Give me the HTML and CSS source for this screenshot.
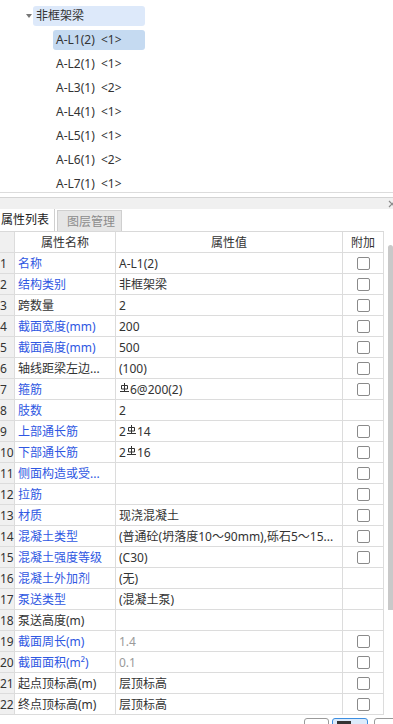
FILE: index.html
```html
<!DOCTYPE html>
<html lang="zh-CN">
<head>
  <meta charset="UTF-8">
  <title>属性列表</title>
  <link rel="stylesheet" href="styles.css">
</head>
<body>
  <!-- 构件树 -->
  <div class="tree">
    <div class="tree-root">
      <span class="caret"></span>
      <span class="tree-label root">非框架梁</span>
    </div>
    <ul class="tree-children">
      <li class="tree-label selected">A-L1(2)  &lt;1&gt;</li>
      <li class="tree-label">A-L2(1)  &lt;1&gt;</li>
      <li class="tree-label">A-L3(1)  &lt;2&gt;</li>
      <li class="tree-label">A-L4(1)  &lt;1&gt;</li>
      <li class="tree-label">A-L5(1)  &lt;1&gt;</li>
      <li class="tree-label">A-L6(1)  &lt;2&gt;</li>
      <li class="tree-label">A-L7(1)  &lt;1&gt;</li>
    </ul>
  </div>

  <div class="splitter">
    <svg class="close" width="8" height="8" viewBox="0 0 8 8"><path d="M1 1L7 7M7 1L1 7" stroke="#8a8a8a" stroke-width="1.2" fill="none"/></svg>
  </div>

  <!-- 标签页 -->
  <div class="tabs">
    <div class="tab active">属性列表</div>
    <div class="tab off">图层管理</div>
  </div>

  <!-- 属性表 -->
  <div class="grid-wrap">
    <div class="prop-table">
      <div class="row head">
        <div class="num"></div>
        <div class="name">属性名称</div>
        <div class="val">属性值</div>
        <div class="extra">附加</div>
      </div>
      <div class="row">
        <div class="num">1</div><div class="name link">名称</div><div class="val">A-L1(2)</div><div class="extra"><span class="chk"></span></div>
      </div>
      <div class="row">
        <div class="num">2</div><div class="name link">结构类别</div><div class="val">非框架梁</div><div class="extra"><span class="chk"></span></div>
      </div>
      <div class="row">
        <div class="num">3</div><div class="name">跨数量</div><div class="val">2</div><div class="extra"><span class="chk"></span></div>
      </div>
      <div class="row">
        <div class="num">4</div><div class="name link">截面宽度(mm)</div><div class="val">200</div><div class="extra"><span class="chk"></span></div>
      </div>
      <div class="row">
        <div class="num">5</div><div class="name link">截面高度(mm)</div><div class="val">500</div><div class="extra"><span class="chk"></span></div>
      </div>
      <div class="row">
        <div class="num">6</div><div class="name">轴线距梁左边...</div><div class="val">(100)</div><div class="extra"><span class="chk"></span></div>
      </div>
      <div class="row">
        <div class="num">7</div><div class="name link">箍筋</div>
        <div class="val"><svg class="bar" width="9" height="9" viewBox="0 0 9 9"><path d="M4.5 0V9M1.5 2.5H7.5V6H1.5ZM0 8.5H9" stroke="#333" stroke-width="1" fill="none"/></svg>6@200(2)</div>
        <div class="extra"><span class="chk"></span></div>
      </div>
      <div class="row">
        <div class="num">8</div><div class="name link">肢数</div><div class="val">2</div><div class="extra"></div>
      </div>
      <div class="row">
        <div class="num">9</div><div class="name link">上部通长筋</div>
        <div class="val">2<svg class="bar" width="9" height="9" viewBox="0 0 9 9"><path d="M4.5 0V9M1.5 2.5H7.5V6H1.5ZM0 8.5H9" stroke="#333" stroke-width="1" fill="none"/></svg>14</div>
        <div class="extra"><span class="chk"></span></div>
      </div>
      <div class="row">
        <div class="num">10</div><div class="name link">下部通长筋</div>
        <div class="val">2<svg class="bar" width="9" height="9" viewBox="0 0 9 9"><path d="M4.5 0V9M1.5 2.5H7.5V6H1.5ZM0 8.5H9" stroke="#333" stroke-width="1" fill="none"/></svg>16</div>
        <div class="extra"><span class="chk"></span></div>
      </div>
      <div class="row">
        <div class="num">11</div><div class="name link">侧面构造或受...</div><div class="val"></div><div class="extra"><span class="chk"></span></div>
      </div>
      <div class="row">
        <div class="num">12</div><div class="name link">拉筋</div><div class="val"></div><div class="extra"><span class="chk"></span></div>
      </div>
      <div class="row">
        <div class="num">13</div><div class="name link">材质</div><div class="val">现浇混凝土</div><div class="extra"><span class="chk"></span></div>
      </div>
      <div class="row">
        <div class="num">14</div><div class="name link">混凝土类型</div><div class="val">(普通砼(坍落度10～90mm),砾石5～15...</div><div class="extra"><span class="chk"></span></div>
      </div>
      <div class="row">
        <div class="num">15</div><div class="name link">混凝土强度等级</div><div class="val">(C30)</div><div class="extra"><span class="chk"></span></div>
      </div>
      <div class="row">
        <div class="num">16</div><div class="name link">混凝土外加剂</div><div class="val">(无)</div><div class="extra"></div>
      </div>
      <div class="row">
        <div class="num">17</div><div class="name link">泵送类型</div><div class="val">(混凝土泵)</div><div class="extra"></div>
      </div>
      <div class="row">
        <div class="num">18</div><div class="name">泵送高度(m)</div><div class="val"></div><div class="extra"></div>
      </div>
      <div class="row">
        <div class="num">19</div><div class="name link">截面周长(m)</div><div class="val muted">1.4</div><div class="extra"><span class="chk"></span></div>
      </div>
      <div class="row">
        <div class="num">20</div><div class="name link">截面面积(m²)</div><div class="val muted">0.1</div><div class="extra"><span class="chk"></span></div>
      </div>
      <div class="row">
        <div class="num">21</div><div class="name">起点顶标高(m)</div><div class="val">层顶标高</div><div class="extra"><span class="chk"></span></div>
      </div>
      <div class="row">
        <div class="num">22</div><div class="name">终点顶标高(m)</div><div class="val">层顶标高</div><div class="extra"><span class="chk"></span></div>
      </div>
    </div>
    <div class="scrollbar"><div class="thumb"></div></div>
  </div>

  <!-- 底部按钮 -->
  <div class="footer">
    <span class="btn small"></span>
    <span class="btn on"><span class="btn-icon"></span></span>
    <span class="btn last"></span>
  </div>
</body>
</html>
```

FILE: styles.css
```css
* {
  box-sizing: border-box;
}
html, body {
  margin: 0;
  height: 724px;
  overflow: hidden;
}
body {
  width: 393px;
  font-family: "Noto Sans", "Noto Sans CJK SC", sans-serif;
  font-size: 12px;
  color: #333;
  background: #fff;
}

/* tree */
.tree {
  height: 193px;
  padding-top: 6px;
  border-bottom: 1px solid #dcdcdc;
  overflow: hidden;
}
.tree-root {
  display: flex;
  align-items: center;
  height: 20px;
  padding-left: 26px;
}
.caret {
  width: 0;
  height: 0;
  margin-right: 1px;
  border-left: 3px solid transparent;
  border-right: 3px solid transparent;
  border-top: 4px solid #777;
}
.tree-label {
  display: block;
  width: 112px;
  height: 20px;
  line-height: 20px;
  padding-left: 3px;
  border-radius: 3px;
  white-space: pre;
}
.tree-label.root {
  background: #dde9fa;
}
.tree-children {
  list-style: none;
  margin: 4px 0 0 53px;
  padding: 0;
  display: flex;
  flex-direction: column;
  gap: 4px;
}
.tree-children .tree-label {
  width: 92px;
}
.tree-label.selected {
  background: #c5daf1;
}

/* splitter + tabs */
.splitter {
  margin-top: 4px;
  height: 12px;
  border-top: 1px solid #d4d4d4;
  background: #f0f0f0;
  display: flex;
  justify-content: flex-end;
  align-items: center;
  overflow: hidden;
}
.close {
  margin-right: -3px;
}
.tabs {
  display: flex;
  align-items: flex-end;
  height: 22px;
}
.tab {
  height: 22px;
  line-height: 21px;
  white-space: nowrap;
}
.tab.active {
  width: 55px;
  padding-left: 1px;
  border-right: 1px solid #cfcfcf;
  color: #222;
}
.tab.off {
  width: 65px;
  height: 21px;
  margin-left: 2px;
  padding-left: 9px;
  background: #e6e6e6;
  border: 1px solid #cfcfcf;
  border-bottom: none;
  color: #8c8c8c;
}

/* property grid */
.grid-wrap {
  display: flex;
}
.prop-table {
  width: 384px;
  border-top: 1px solid #d9d9d9;
}
.row {
  display: grid;
  grid-template-columns: 15px 101px 227px 41px;
  height: 21px;
}
.row > div {
  display: flex;
  align-items: center;
  overflow: hidden;
  white-space: nowrap;
  border-right: 1px solid #dcdcdc;
  border-bottom: 1px solid #dcdcdc;
}
.row .num {
  background: #f0f0f0;
}
.row .name,
.row .val {
  padding-left: 3px;
}
.row .extra {
  justify-content: center;
}
.row.head > div {
  justify-content: center;
  padding-left: 0;
}
.link {
  color: #2f57e2;
}
.muted {
  color: #9a9a9a;
}
.bar {
  margin: 0 1px 3px 1px;
  flex-shrink: 0;
}
.chk {
  width: 13px;
  height: 13px;
  border: 1px solid #8a8a8a;
  border-radius: 2px;
}
.scrollbar {
  width: 9px;
}
.thumb {
  width: 5px;
  height: 365px;
  margin: 14px 0 0 4px;
  background: #c9c9c9;
  border-radius: 3px 3px 0 0;
}

/* bottom buttons */
.footer {
  display: flex;
  padding: 3px 0 0 304px;
}
.btn {
  height: 22px;
  border: 1px solid #9a9a9a;
  border-radius: 3px;
  flex-shrink: 0;
}
.btn.small {
  width: 25px;
  margin-right: 3px;
}
.btn.on {
  width: 36px;
  margin-right: 6px;
  padding: 2px 0 0 4px;
  border-color: #3d8ee0;
  background: #dcebfb;
}
.btn-icon {
  display: block;
  width: 14px;
  height: 3px;
  background: #333;
}
.btn.last {
  width: 30px;
}
```
